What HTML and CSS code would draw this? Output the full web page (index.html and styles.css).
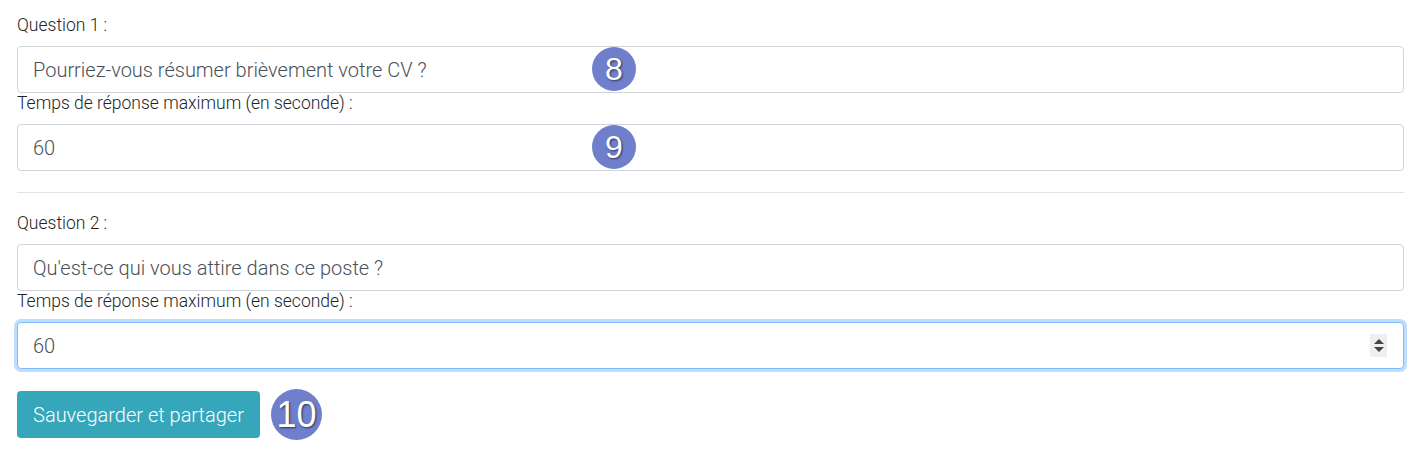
FILE: index.html
```html
<!DOCTYPE html>
<html lang="fr">

<head>
    <meta charset="UTF-8">
    <meta name="viewport" content="width=device-width, initial-scale=1.0">
    <title>Questions</title>
    <link rel="stylesheet" href="styles.css">
</head>

<body>
    <form class="questions">
        <div class="question">
            <label class="label">Question 1 :</label>
            <div class="field">
                <input type="text" class="control" value="Pourriez-vous résumer brièvement votre CV ?">
                <span class="step step-over">8</span>
            </div>
            <label class="label">Temps de réponse maximum (en seconde) :</label>
            <div class="field">
                <input type="text" class="control" value="60">
                <span class="step step-over">9</span>
            </div>
        </div>

        <hr class="sep">

        <div class="question">
            <label class="label">Question 2 :</label>
            <div class="field">
                <input type="text" class="control" value="Qu'est-ce qui vous attire dans ce poste ?">
            </div>
            <label class="label">Temps de réponse maximum (en seconde) :</label>
            <div class="field">
                <input type="text" class="control focused" value="60" autofocus>
                <span class="spinner"><i class="up"></i><i class="down"></i></span>
            </div>
        </div>

        <div class="actions">
            <button type="button" class="btn-save">Sauvegarder et partager</button>
            <span class="step step-big">10</span>
        </div>
    </form>
</body>

</html>
```

FILE: styles.css
```css
* {
    box-sizing: border-box;
}

body {
    margin: 0;
    padding: 15px 16px 0 17px;
    font-family: Roboto, "Liberation Sans", sans-serif;
    font-weight: 300;
    color: #212529;
    background: #fff;
}

.label {
    display: block;
    font-size: 17.5px;
    line-height: 21px;
    margin-bottom: 10px;
}

.field {
    position: relative;
}

.control {
    display: block;
    width: 100%;
    height: 47px;
    padding: 0 15px;
    font-family: Roboto, "Liberation Sans", sans-serif;
    font-weight: 300;
    font-size: 20px;
    color: #495057;
    background: #fff;
    border: 1px solid #ced4da;
    border-radius: 4px;
    outline: none;
}

.control.focused {
    border-color: #80bdff;
    box-shadow: 0 0 0 3px rgba(0, 123, 255, 0.25);
    caret-color: #222;
}

.sep {
    margin: 21px 0 20px;
    border: 0;
    border-top: 1px solid #e3e3e3;
}

.step {
    display: flex;
    align-items: center;
    justify-content: center;
    border-radius: 50%;
    background: #6f7fcc;
    color: #fff;
    font-family: "Liberation Sans", Arial, sans-serif;
    text-shadow: 1px 1px 2px rgba(0, 0, 0, 0.6);
}

.step-over {
    position: absolute;
    left: 575px;
    top: 1px;
    width: 44px;
    height: 44px;
    font-size: 32px;
}

.spinner {
    position: absolute;
    right: 17px;
    top: 12px;
    width: 17px;
    height: 23px;
    background: #efefef;
    display: flex;
    flex-direction: column;
    align-items: center;
    justify-content: center;
    gap: 3px;
}

.spinner i {
    width: 0;
    height: 0;
    border-left: 5px solid transparent;
    border-right: 5px solid transparent;
}

.spinner .up {
    border-bottom: 5px solid #444;
}

.spinner .down {
    border-top: 5px solid #444;
}

.actions {
    display: flex;
    align-items: center;
    gap: 11px;
    margin-top: 20px;
}

.btn-save {
    width: 243px;
    height: 47px;
    padding: 0;
    font-family: Roboto, "Liberation Sans", sans-serif;
    font-weight: 300;
    font-size: 20px;
    color: #fff;
    background: #36a6bb;
    border: 0;
    border-radius: 4px;
    cursor: pointer;
}

.step-big {
    width: 51px;
    height: 51px;
    font-size: 36px;
}
```
